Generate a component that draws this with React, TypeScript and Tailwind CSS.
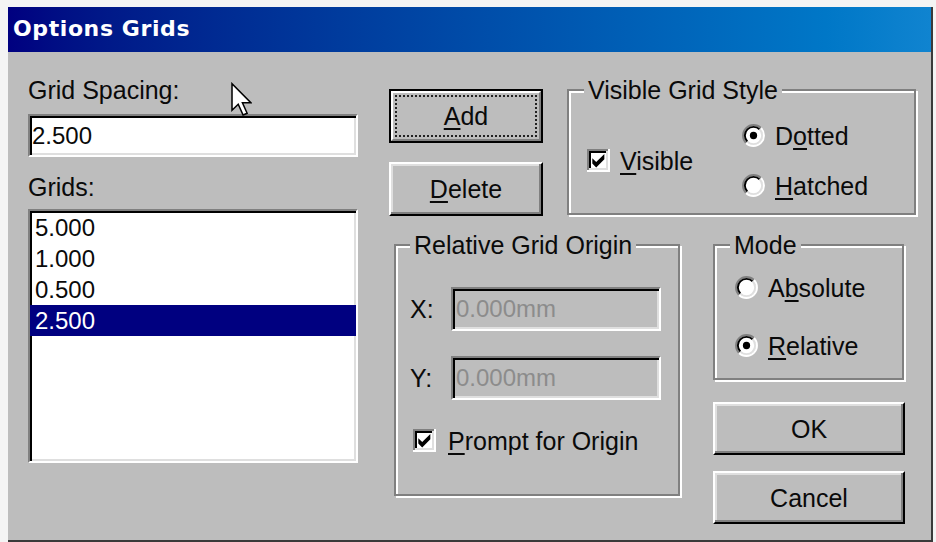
import React from "react";

const SUNKEN =
  "border-2 border-t-[#808080] border-l-[#808080] border-r-white border-b-white shadow-[inset_2px_2px_0_#000,inset_-2px_-2px_0_#dfdfdf]";
const RAISED =
  "border-2 border-t-white border-l-white border-r-black border-b-black shadow-[inset_-2px_-2px_0_#808080,inset_2px_2px_0_#dfdfdf]";
const ETCHED = "border-2 border-[#808080] shadow-[inset_2px_2px_0_#fff,2px_2px_0_#fff]";

function CheckBox() {
  return (
    <svg width="23" height="23" viewBox="0 0 13 13" className="shrink-0">
      <rect x="0" y="0" width="13" height="13" fill="#fff" />
      <path d="M0 0H12V1H1V12H0Z" fill="#808080" shapeRendering="crispEdges" />
      <path d="M1 1H11V2H2V11H1Z" fill="#000" shapeRendering="crispEdges" />
      <path d="M12 0H13V13H0V12H12Z" fill="#fff" shapeRendering="crispEdges" />
      <path d="M11 1H12V12H1V11H11Z" fill="#dfdfdf" shapeRendering="crispEdges" />
      <path d="M3 5.2L5.2 7.4L9.8 2.8V5.8L5.2 10.4L3 8.2Z" fill="#000" />
    </svg>
  );
}

function Radio({ checked }: { checked?: boolean }) {
  return (
    <svg width="23" height="23" viewBox="0 0 12 12" className="shrink-0">
      <circle cx="6" cy="6" r="5" fill="#fff" />
      <path d="M2.111 9.889A5.5 5.5 0 0 1 9.889 2.111" fill="none" stroke="#808080" strokeWidth="1" />
      <path d="M9.889 2.111A5.5 5.5 0 0 1 2.111 9.889" fill="none" stroke="#fff" strokeWidth="1" />
      <path d="M2.818 9.182A4.5 4.5 0 0 1 9.182 2.818" fill="none" stroke="#000" strokeWidth="1" />
      <path d="M9.182 2.818A4.5 4.5 0 0 1 2.818 9.182" fill="none" stroke="#dfdfdf" strokeWidth="1" />
      {checked && <circle cx="6" cy="6" r="1.9" fill="#000" />}
    </svg>
  );
}

function U({ children }: { children: React.ReactNode }) {
  return <u className="underline decoration-2 underline-offset-[3px]">{children}</u>;
}

function Group({
  legend,
  legendMl,
  className,
  children,
}: {
  legend: string;
  legendMl: string;
  className: string;
  children: React.ReactNode;
}) {
  return (
    <div className={`${ETCHED} ${className}`}>
      <div className={`-mt-[15px] w-fit bg-[#bdbdbd] px-[4px] leading-[28px] ${legendMl}`}>{legend}</div>
      {children}
    </div>
  );
}

function RadioItem({ checked, children }: { checked?: boolean; children: React.ReactNode }) {
  return (
    <div className="flex h-[23px] items-center gap-[10px] leading-[28px]">
      <Radio checked={checked} />
      <span>{children}</span>
    </div>
  );
}

function Button({ children, className }: { children: React.ReactNode; className: string }) {
  return (
    <div className={`flex items-center justify-center bg-[#bdbdbd] leading-[28px] ${RAISED} ${className}`}>
      <span>{children}</span>
    </div>
  );
}

export default function App() {
  return (
    <div className="relative h-[542px] w-[936px] overflow-hidden bg-[#f4f4f4] pl-[8px] pt-[7px] font-['Liberation_Sans',Arial,sans-serif] text-[25px] text-[#0a0a0a]">
      <div className="flex h-[535px] w-[925px] flex-col border-r-2 border-b-2 border-[#3a3a3a] bg-[#bdbdbd]">
        {/* Title bar */}
        <div className="flex h-[45px] shrink-0 items-center bg-linear-to-r from-[#000080] to-[#1084d0] pb-[3px] pl-[5px]">
          <span className="font-['DejaVu_Sans',sans-serif] text-[22px] font-bold tracking-[0.6px] text-white">
            Options Grids
          </span>
        </div>

        {/* Body */}
        <div className="flex flex-1 pl-[20px] pt-[24px]">
          {/* Left column */}
          <div className="flex w-[330px] flex-col">
            <div className="leading-[28px]">Grid Spacing:</div>
            <div className={`mt-[10px] flex h-[43px] items-center bg-white pl-[2px] text-[24px] ${SUNKEN}`}>2.500</div>
            <div className="mt-[16px] leading-[28px]">Grids:</div>
            <div className={`mt-[8px] flex h-[254px] flex-col bg-white pt-[1px] text-[24px] ${SUNKEN}`}>
              <div className="h-[31px] pl-[5px] leading-[31px]">5.000</div>
              <div className="h-[31px] pl-[5px] leading-[31px]">1.000</div>
              <div className="h-[31px] pl-[5px] leading-[31px]">0.500</div>
              <div className="h-[31px] bg-[#000080] pl-[5px] leading-[31px] text-white">2.500</div>
            </div>
          </div>

          {/* Right area */}
          <div className="ml-[31px] flex w-[527px] flex-col">
            {/* Top row */}
            <div className="flex">
              <div className="mt-[13px] flex w-[154px] flex-col gap-[19px]">
                <div className="h-[54px] w-[154px] border-2 border-black bg-[#bdbdbd]">
                  <div className="flex h-full w-full border-2 border-t-white border-l-white border-r-[#808080] border-b-[#808080] p-[2px]">
                    <div className="flex flex-1 items-center justify-center border-2 border-dotted border-[#222] leading-[28px]">
                      <span>
                        <U>A</U>dd
                      </span>
                    </div>
                  </div>
                </div>
                <Button className="h-[54px] w-[154px]">
                  <U>D</U>elete
                </Button>
              </div>

              <Group legend="Visible Grid Style" legendMl="ml-[15px]" className="ml-[24px] mt-[13px] h-[126px] w-[349px]">
                <div className="mt-[20px] flex items-center pl-[18px]">
                  <div className="flex w-[155px] items-center gap-[10px] leading-[28px]">
                    <CheckBox />
                    <span>
                      <U>V</U>isible
                    </span>
                  </div>
                  <div className="flex flex-col gap-[27px]">
                    <RadioItem checked>
                      D<U>o</U>tted
                    </RadioItem>
                    <RadioItem>
                      <U>H</U>atched
                    </RadioItem>
                  </div>
                </div>
              </Group>
            </div>

            {/* Bottom row */}
            <div className="mt-[15px] flex">
              <Group legend="Relative Grid Origin" legendMl="ml-[14px]" className="ml-[5px] mt-[13px] h-[252px] w-[286px]">
                <div className="mt-[28px] flex items-center pl-[14px]">
                  <div className="w-[41px] leading-[28px]">X:</div>
                  <div className={`flex h-[44px] w-[210px] items-center pl-[3px] text-[24px] text-[#8c8c8c] ${SUNKEN}`}>
                    0.000mm
                  </div>
                </div>
                <div className="mt-[25px] flex items-center pl-[14px]">
                  <div className="w-[41px] leading-[28px]">Y:</div>
                  <div className={`flex h-[44px] w-[210px] items-center pl-[3px] text-[24px] text-[#8c8c8c] ${SUNKEN}`}>
                    0.000mm
                  </div>
                </div>
                <div className="mt-[29px] flex h-[23px] items-center gap-[12px] pl-[17px] leading-[28px]">
                  <CheckBox />
                  <span>
                    <U>P</U>rompt for Origin
                  </span>
                </div>
              </Group>

              <div className="ml-[33px] flex w-[192px] flex-col">
                <Group legend="Mode" legendMl="ml-[15px]" className="mt-[13px] h-[136px] w-[191px]">
                  <div className="mt-[17px] flex flex-col gap-[35px] pl-[20px]">
                    <RadioItem>
                      A<U>b</U>solute
                    </RadioItem>
                    <RadioItem checked>
                      <U>R</U>elative
                    </RadioItem>
                  </div>
                </Group>
                <Button className="mt-[22px] h-[53px] w-[192px]">OK</Button>
                <Button className="mt-[16px] h-[53px] w-[192px]">Cancel</Button>
              </div>
            </div>
          </div>
        </div>
      </div>

      {/* Mouse cursor overlay */}
      <svg
        className="absolute left-[231px] top-[82px]"
        width="21"
        height="35"
        viewBox="0 0 12.5 20"
      >
        <polygon
          points="0.6,0.6 0.6,16.4 4.3,12.8 7.2,19.2 9.6,18.2 6.8,11.9 11.8,11.9"
          fill="#fff"
          stroke="#000"
          strokeWidth="0.9"
          strokeLinejoin="miter"
        />
      </svg>
    </div>
  );
}
